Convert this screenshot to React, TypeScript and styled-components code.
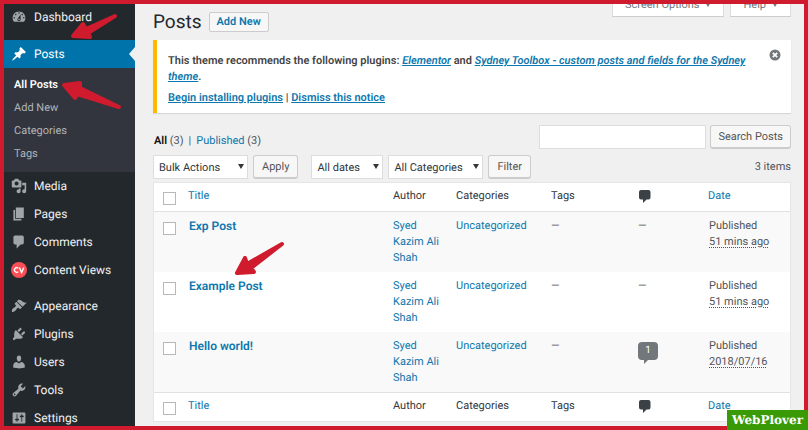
import React from "react";
import styled, { createGlobalStyle, css } from "styled-components";

const RED = "#cf1b2d";
const LINK = "#0e77ad";

const Global = createGlobalStyle`
  *, *::before, *::after { box-sizing: border-box; }
  body { margin: 0; background: ${RED}; text-rendering: geometricPrecision; }
  body, button, input, select { font-family: Roboto, "Liberation Sans", sans-serif; }
  button, input, select { text-rendering: inherit; }
  h1, ul, p { margin: 0; padding: 0; }
  ul { list-style: none; }
`;

const Frame = styled.div`
  position: relative;
  display: flex;
  height: 100vh;
  border: 4px solid ${RED};
  background: #f0f0f0;
  color: #50555a;
  font-size: 11px;
  line-height: 16px;
  overflow: hidden;
`;

const Sidebar = styled.nav`
  flex: 0 0 131px;
  background: #23282d;
  overflow: hidden;
`;

const MenuGroup = styled.ul<{ $first?: boolean }>`
  margin-bottom: ${(p) => (p.$first ? 9 : 8)}px;
  margin-top: ${(p) => (p.$first ? -1 : 0)}px;
`;

const MenuLink = styled.a<{ $current?: boolean }>`
  position: relative;
  display: flex;
  align-items: center;
  gap: 7px;
  height: 28px;
  padding-left: 7px;
  color: ${(p) => (p.$current ? "#fff" : "#f0f1f2")};
  background: ${(p) => (p.$current ? "#0073aa" : "transparent")};
  font-size: 12px;
  text-decoration: none;
  svg {
    flex: none;
    fill: ${(p) => (p.$current ? "#fff" : "#a0a5aa")};
  }
  ${(p) =>
    p.$current &&
    css`
      &::after {
        content: "";
        position: absolute;
        right: 0;
        top: 7px;
        border: 7px solid transparent;
        border-left: 0;
        border-right: 6px solid #f0f0f0;
      }
    `}
`;

const SubMenu = styled.ul`
  padding: 5px 0 7px 10px;
  background: #32353e;
`;

const SubLink = styled.a<{ $current?: boolean }>`
  display: block;
  font-size: 11px;
  line-height: 23px;
  color: ${(p) => (p.$current ? "#fff" : "#b0b4b9")};
  font-weight: ${(p) => (p.$current ? 600 : 400)};
  text-decoration: none;
`;

const Main = styled.main`
  flex: 1;
  min-width: 0;
  padding: 0 13px 0 18px;
`;

const Header = styled.header`
  display: flex;
  align-items: flex-start;
  justify-content: space-between;
  height: 36px;
`;

const TitleRow = styled.div`
  display: flex;
  align-items: center;
  gap: 7px;
  padding-top: 8px;
`;

const Heading = styled.h1`
  font-size: 19px;
  line-height: 20px;
  font-weight: 400;
  color: #23282d;
`;

const AddNew = styled.a`
  padding: 0 7px;
  border: 1px solid #ccc;
  border-radius: 2px;
  background: #f7f7f7;
  color: ${LINK};
  font-size: 11px;
  line-height: 18px;
  font-weight: 600;
  text-decoration: none;
`;

const MetaTabs = styled.div`
  display: flex;
  gap: 6px;
  margin-top: -12px;
`;

const MetaTab = styled.button`
  display: flex;
  align-items: center;
  gap: 6px;
  height: 25px;
  padding: 0 12px;
  border: 1px solid #ddd;
  border-bottom-color: #ccc;
  background: #fff;
  color: #72777c;
  font-size: 11px;
`;

const Notice = styled.section`
  display: flex;
  justify-content: space-between;
  align-items: flex-start;
  padding: 9px 10px 7px 11px;
  border-left: 4px solid #ffb900;
  background: #fff;
  box-shadow: 0 1px 1px rgba(0, 0, 0, 0.1);
  color: #444;
  font-weight: 600;
`;

const NoticeText = styled.div`
  display: grid;
  gap: 5px;
  max-width: 590px;
  padding-top: 4px;
  a { color: ${LINK}; }
`;

const Dismiss = styled.button`
  display: flex;
  padding: 0;
  border: 0;
  background: none;
`;

const SearchRow = styled.form`
  display: flex;
  align-items: flex-end;
  gap: 4px;
  margin-top: 12px;
`;

const Views = styled.ul`
  display: flex;
  gap: 5px;
  margin-right: auto;
  padding-left: 1px;
  b { color: #111; font-weight: 600; }
  a { color: ${LINK}; text-decoration: none; }
`;

const SearchBox = styled.input`
  width: 167px;
  height: 24px;
  border: 1px solid #ddd;
  background: #fff;
  font-size: 11px;
`;

const Button = styled.button<{ $tight?: boolean }>`
  height: 24px;
  padding: 0 ${(p) => (p.$tight ? 7 : 8)}px;
  border: 1px solid #ccc;
  border-bottom-width: 2px;
  border-radius: 3px;
  background: #f7f7f7;
  color: #555;
  font-size: 11px;
  line-height: 20px;
  white-space: nowrap;
`;

const TableNav = styled.div`
  display: flex;
  align-items: center;
  gap: 5px;
  margin: 6px 0 3px;
`;

const NavGroup = styled.div`
  display: flex;
  align-items: center;
  gap: 5px;
  margin-right: 8px;
`;

const ItemCount = styled.span`
  margin-left: auto;
`;

const SelectWrap = styled.span<{ $w: number }>`
  position: relative;
  display: flex;
  width: ${(p) => p.$w}px;
  svg {
    position: absolute;
    right: 4px;
    top: 9px;
    pointer-events: none;
  }
`;

const Select = styled.select`
  appearance: none;
  width: 100%;
  height: 24px;
  padding: 0 5px;
  border: 1px solid #ddd;
  border-radius: 0;
  background: #fff;
  color: #32373c;
  font-size: 11px;
`;

const Table = styled.table`
  width: 100%;
  table-layout: fixed;
  border-collapse: separate;
  border-spacing: 0;
  border: 1px solid #e5e5e5;
  background: #fff;
  a { color: ${LINK}; text-decoration: none; }
`;

const Th = styled.th<{ $foot?: boolean }>`
  height: 29px;
  padding: 0 6px 2px;
  text-align: left;
  vertical-align: middle;
  font-size: 11px;
  font-weight: 400;
  color: #32373c;
  ${(p) => (p.$foot ? "border-top" : "border-bottom")}: 1px solid #e1e1e1;
  svg { display: block; margin-left: 1px; }
`;

const Td = styled.td`
  padding: 6px 6px;
  vertical-align: top;
  tr:nth-child(odd) > & { background: #f9f9f9; }
`;

const PostTitle = styled.a`
  display: block;
  padding-left: 1px;
  font-size: 12px;
  font-weight: 600;
`;

const DateText = styled.div`
  padding-left: 1px;
`;

const Stamp = styled.abbr`
  text-decoration: underline dotted;
  text-underline-offset: 2px;
`;

const Check = styled.input`
  appearance: none;
  display: block;
  width: 13px;
  height: 13px;
  margin: 4px 0 0 3px;
  border: 1px solid #b4b9be;
  background: #fff;
`;

const CountBubble = styled.a`
  position: relative;
  display: block;
  width: 20px;
  height: 18px;
  margin-top: 4px;
  border-radius: 4px;
  background: #72777c;
  font-size: 10px;
  line-height: 17px;
  text-align: center;
  && { color: #fff; }
  &::after {
    content: "";
    position: absolute;
    left: 6px;
    top: 18px;
    border-top: 4px solid #72777c;
    border-right: 4px solid transparent;
  }
`;

const Arrows = styled.svg`
  position: absolute;
  left: -4px;
  top: -4px;
  pointer-events: none;
  fill: ${RED};
  stroke: ${RED};
  stroke-width: 4;
  stroke-linejoin: round;
`;

const Badge = styled.a`
  position: fixed;
  right: 0;
  bottom: 0;
  padding: 0 5px;
  background: #399a05;
  color: #fff;
  font: bold 12px/20px "DejaVu Serif", serif;
  text-decoration: none;
`;

const ICONS: Record<string, string> = {
  Dashboard:
    "M3.76 16h12.48c1.1-1.37 1.76-3.11 1.76-5 0-4.42-3.58-8-8-8s-8 3.58-8 8c0 1.89.66 3.63 1.76 5zM10 4c.55 0 1 .45 1 1s-.45 1-1 1-1-.45-1-1 .45-1 1-1zM6 6c.55 0 1 .45 1 1s-.45 1-1 1-1-.45-1-1 .45-1 1-1zm8 0c.55 0 1 .45 1 1s-.45 1-1 1-1-.45-1-1 .45-1 1-1zm-5.37 5.55L12 7v6c0 1.1-.9 2-2 2s-2-.9-2-2c0-.57.24-1.08.63-1.45zM4 10c.55 0 1 .45 1 1s-.45 1-1 1-1-.45-1-1 .45-1 1-1zm12 0c.55 0 1 .45 1 1s-.45 1-1 1-1-.45-1-1 .45-1 1-1zm-5 3c0-.55-.45-1-1-1s-1 .45-1 1 .45 1 1 1 1-.45 1-1z",
  Posts:
    "M10.44 3.02l1.82-1.82 6.36 6.35-1.83 1.82c-1.05-.68-2.48-.57-3.41.36l-.75.75c-.92.93-1.04 2.35-.35 3.41l-1.83 1.82-2.41-2.41-2.8 2.79c-.42.42-3.38 2.71-3.8 2.29s1.86-3.39 2.28-3.81l2.79-2.79L4.1 9.36l1.83-1.82c1.05.69 2.48.57 3.4-.36l.75-.75c.93-.92 1.05-2.35.36-3.41z",
  Media:
    "M13 11V4c0-.55-.45-1-1-1h-1.67L9 1H5L3.67 3H2c-.55 0-1 .45-1 1v7c0 .55.45 1 1 1h10c.55 0 1-.45 1-1zM7 4.5c1.38 0 2.5 1.12 2.5 2.5S8.38 9.5 7 9.5 4.5 8.38 4.5 7 5.62 4.5 7 4.5zM14 6h5v10.5c0 1.38-1.12 2.5-2.5 2.5S14 17.88 14 16.5s1.12-2.5 2.5-2.5c.17 0 .34.02.5.05V9h-3V6zm-4 8.05V13h2v3.5c0 1.38-1.12 2.5-2.5 2.5S7 17.88 7 16.5 8.12 14 9.5 14c.17 0 .34.02.5.05z",
  Pages: "M6 15V2h10v13H6zm-1 1h8v2H3V5h2v11z",
  Comments:
    "M5 2h9c1.1 0 2 .9 2 2v7c0 1.1-.9 2-2 2h-2l-5 5v-5H5c-1.1 0-2-.9-2-2V4c0-1.1.9-2 2-2z",
  Appearance:
    "M14.48 11.06L7.41 3.99l1.5-1.5c.5-.56 2.3-.47 3.51.32 1.21.8 1.43 1.28 2.91 2.1 1.18.64 2.45 1.26 4.45.85zm-.71.71L6.7 4.7 4.93 6.47c-.39.39-.39 1.02 0 1.41l1.06 1.06c.39.39.39 1.03 0 1.42-.6.6-1.43 1.11-2.21 1.69-.35.26-.7.53-1.01.84C1.43 14.23.4 16.08 1.4 17.07c.99 1 2.84-.03 4.18-1.36.31-.31.58-.66.85-1.02.57-.78 1.08-1.61 1.69-2.21.39-.39 1.02-.39 1.41 0l1.06 1.06c.39.39 1.02.39 1.41 0z",
  Plugins:
    "M13.11 4.36L9.87 7.6 8 5.73l3.24-3.24c.35-.34 1.05-.2 1.56.32.52.51.66 1.21.31 1.55zm-8 1.77l.91-1.12 9.01 9.01-1.19.84c-.71.71-2.63 1.16-3.82 1.16H6.14L4.9 17.26c-.59.59-1.54.59-2.12 0-.59-.58-.59-1.53 0-2.12l1.24-1.24v-3.88c0-1.13.4-3.19 1.09-3.89zm7.26 3.97l3.24-3.24c.34-.35 1.04-.21 1.55.31.52.51.66 1.21.31 1.55l-3.24 3.25z",
  Users:
    "M10 9.25c-2.27 0-2.73-3.44-2.73-3.44C7 4.02 7.82 2 9.97 2c2.16 0 2.98 2.02 2.71 3.81 0 0-.41 3.44-2.68 3.44zm0 2.57L12.72 10c2.39 0 4.52 2.33 4.52 4.53v2.49s-3.65 1.13-7.24 1.13c-3.65 0-7.24-1.13-7.24-1.13v-2.49c0-2.25 1.94-4.48 4.47-4.48z",
  Tools:
    "M16.68 9.77c-1.34 1.34-3.3 1.67-4.95.99l-5.41 6.52c-.99.99-2.59.99-3.58 0s-.99-2.59 0-3.57l6.52-5.42c-.68-1.65-.35-3.61.99-4.95 1.28-1.28 3.12-1.62 4.72-1.06l-2.89 2.89 2.82 2.82 2.86-2.87c.53 1.58.18 3.39-1.08 4.65zM3.81 16.21c.4.39 1.04.39 1.43 0 .4-.4.4-1.04 0-1.43-.39-.4-1.03-.4-1.43 0-.39.39-.39 1.03 0 1.43z",
  Settings:
    "M18 16V4c0-.55-.45-1-1-1H3c-.55 0-1 .45-1 1v12c0 .55.45 1 1 1h14c.55 0 1-.45 1-1zM8 11h1c.55 0 1 .45 1 1s-.45 1-1 1H8v1.5c0 .28-.22.5-.5.5s-.5-.22-.5-.5V13H6c-.55 0-1-.45-1-1s.45-1 1-1h1V5.5c0-.28.22-.5.5-.5s.5.22.5.5V11zm5-2h-1c-.55 0-1-.45-1-1s.45-1 1-1h1V5.5c0-.28.22-.5.5-.5s.5.22.5.5V7h1c.55 0 1 .45 1 1s-.45 1-1 1h-1v5.5c0 .28-.22.5-.5.5s-.5-.22-.5-.5V9z",
};

const MenuIcon = ({ name }: { name: string }) =>
  name === "Content Views" ? (
    <svg width="16" height="16" viewBox="0 0 16 16" aria-hidden="true">
      <circle cx="8" cy="8" r="8" style={{ fill: "#fb4f58" }} />
      <path d="M7.2 6.2A2.3 2.3 0 1 0 7.2 9.800M8.400 5.500L10.600 10.500 12.800 5.500" fill="none" stroke="#fff" strokeWidth="1.4" style={{ fill: "none" }} />
    </svg>
  ) : (
    <svg width="16" height="16" viewBox="0 0 20 20" aria-hidden="true">
      <path fillRule="evenodd" d={ICONS[name]} />
    </svg>
  );

const Item = ({ name, current }: { name: string; current?: boolean }) => (
  <li>
    <MenuLink href="#" $current={current}>
      <MenuIcon name={name} />
      {name}
    </MenuLink>
    {current && (
      <SubMenu>
        {["All Posts", "Add New", "Categories", "Tags"].map((s, i) => (
          <li key={s}>
            <SubLink href="#" $current={i === 0}>{s}</SubLink>
          </li>
        ))}
      </SubMenu>
    )}
  </li>
);

const Caret = ({ color = "#32373c" }: { color?: string }) => (
  <svg width="6" height="5" viewBox="0 0 6 5" aria-hidden="true">
    <path d="M0 0H6L3 5Z" fill={color} />
  </svg>
);

const Dropdown = ({ label, text, w }: { label: string; text: string; w: number }) => (
  <SelectWrap $w={w}>
    <Select aria-label={label}>
      <option>{text}</option>
    </Select>
    <Caret />
  </SelectWrap>
);

const Bubble = () => (
  <svg width="12" height="13" viewBox="0 0 12 13" role="img" aria-label="Comments">
    <path d="M2 0h7.500a2 2 0 0 1 2 2v5.500a2 2 0 0 1-2 2H7.500L4 13V9.500H2a2 2 0 0 1-2-2V2a2 2 0 0 1 2-2z" fill="#3c4146" />
  </svg>
);

const HeadCells = ({ foot }: { foot?: boolean }) => (
  <tr>
    <Th $foot={foot}><Check type="checkbox" aria-label="Select all" /></Th>
    <Th $foot={foot}><a href="#">Title</a></Th>
    <Th $foot={foot}>Author</Th>
    <Th $foot={foot}>Categories</Th>
    <Th $foot={foot}>Tags</Th>
    <Th $foot={foot}><Bubble /></Th>
    <Th $foot={foot}><a href="#">Date</a></Th>
  </tr>
);

const POSTS = [
  { title: "Exp Post", comments: 0, date: "51 mins ago" },
  { title: "Example Post", comments: 0, date: "51 mins ago" },
  { title: "Hello world!", comments: 1, date: "2018/07/16" },
];

export default function App() {
  return (
    <>
      <Global />
      <Frame>
        <Sidebar aria-label="Admin menu">
          <MenuGroup $first>
            <Item name="Dashboard" />
          </MenuGroup>
          <MenuGroup>
            <Item name="Posts" current />
            {["Media", "Pages", "Comments", "Content Views"].map((n) => (
              <Item key={n} name={n} />
            ))}
          </MenuGroup>
          <MenuGroup>
            {["Appearance", "Plugins", "Users", "Tools", "Settings"].map((n) => (
              <Item key={n} name={n} />
            ))}
          </MenuGroup>
        </Sidebar>

        <Main>
          <Header>
            <TitleRow>
              <Heading>Posts</Heading>
              <AddNew href="#">Add New</AddNew>
            </TitleRow>
            <MetaTabs>
              <MetaTab type="button">Screen Options <Caret color="#72777c" /></MetaTab>
              <MetaTab type="button">Help <Caret color="#72777c" /></MetaTab>
            </MetaTabs>
          </Header>

          <Notice>
            <NoticeText>
              <p>
                This theme recommends the following plugins: <a href="#"><em>Elementor</em></a> and{" "}
                <a href="#"><em>Sydney Toolbox - custom posts and fields for the Sydney theme</em></a>.
              </p>
              <p>
                <a href="#">Begin installing plugins</a> | <a href="#">Dismiss this notice</a>
              </p>
            </NoticeText>
            <Dismiss type="button" aria-label="Dismiss">
              <svg width="12" height="12" viewBox="0 0 12 12" aria-hidden="true">
                <circle cx="6" cy="6" r="5.500" fill="#72777c" />
                <path d="M3.800 3.800L8.200 8.200M8.200 3.800L3.800 8.200" stroke="#fff" strokeWidth="1.700" />
              </svg>
            </Dismiss>
          </Notice>

          <SearchRow>
            <Views>
              <li><b>All</b> (3)</li>
              <li>|</li>
              <li><a href="#">Published</a> (3)</li>
            </Views>
            <SearchBox type="search" aria-label="Search Posts" />
            <Button type="button" $tight>Search Posts</Button>
          </SearchRow>

          <TableNav>
            <NavGroup>
              <Dropdown label="Bulk action" text="Bulk Actions" w={95} />
              <Button type="button">Apply</Button>
            </NavGroup>
            <Dropdown label="Filter by date" text="All dates" w={72} />
            <Dropdown label="Filter by category" text="All Categories" w={95} />
            <Button type="button">Filter</Button>
            <ItemCount>3 items</ItemCount>
          </TableNav>

          <Table>
            <colgroup>
              <col width="28" />
              <col />
              <col width="63" />
              <col width="95" />
              <col width="87" />
              <col width="70" />
              <col width="88" />
            </colgroup>
            <thead><HeadCells /></thead>
            <tbody>
              {POSTS.map((p) => (
                <tr key={p.title}>
                  <Td><Check type="checkbox" aria-label={`Select ${p.title}`} /></Td>
                  <Td><PostTitle href="#">{p.title}</PostTitle></Td>
                  <Td><a href="#">Syed Kazim Ali Shah</a></Td>
                  <Td><a href="#">Uncategorized</a></Td>
                  <Td>—</Td>
                  <Td>{p.comments ? <CountBubble href="#">{p.comments}</CountBubble> : "—"}</Td>
                  <Td><DateText>Published<br /><Stamp>{p.date}</Stamp></DateText></Td>
                </tr>
              ))}
            </tbody>
            <tfoot><HeadCells foot /></tfoot>
          </Table>
        </Main>

        <Arrows width="300" height="290" viewBox="0 0 300 290" aria-hidden="true">
          <path d="M115 16L86 29 83 24 73 36 90 37 88 33Z" />
          <path d="M119 107L80 88 80 83 64 85 75 98 77 94Z" />
          <path d="M282 244L247 264 245 258 237 273 254 272 251 268Z" />
        </Arrows>
      </Frame>
      <Badge href="#">WebPlover</Badge>
    </>
  );
}
